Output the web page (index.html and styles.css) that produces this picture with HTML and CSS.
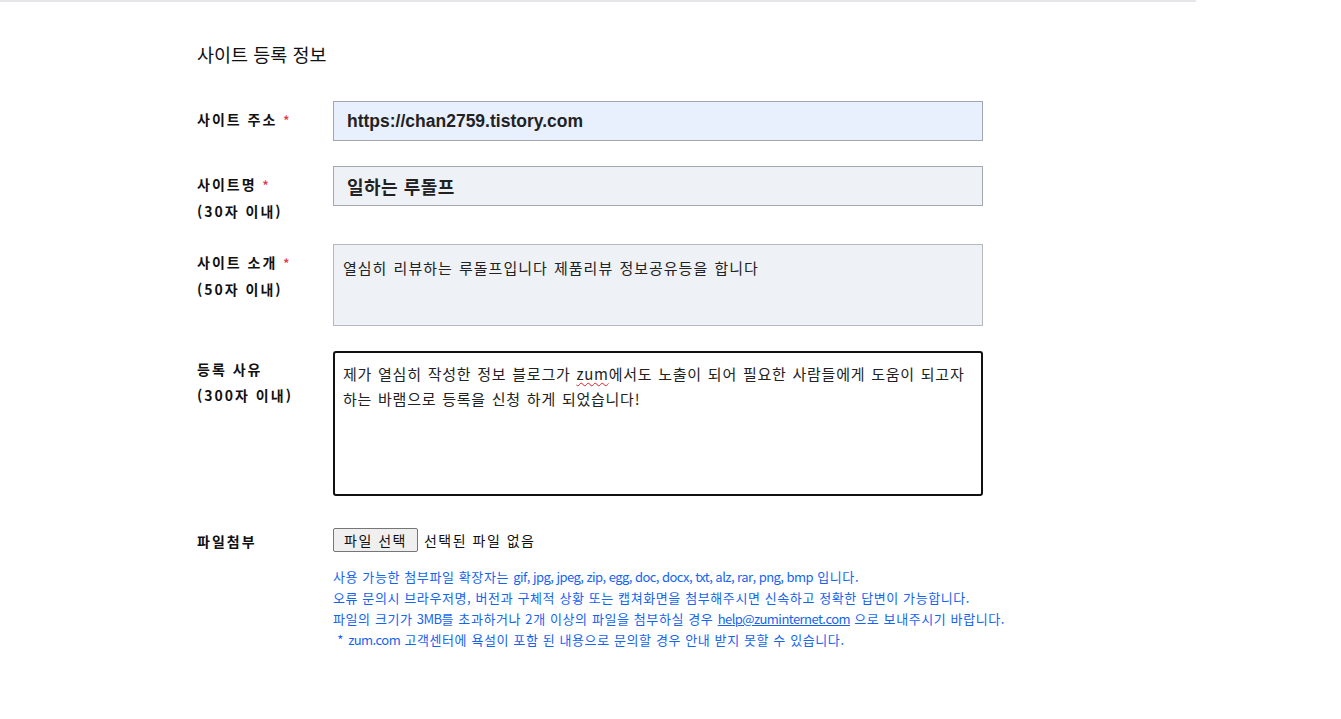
FILE: index.html
```html
<!DOCTYPE html>
<html lang="ko">
<head>
<meta charset="utf-8">
<title>사이트 등록 정보</title>
<link rel="stylesheet" href="styles.css">
</head>
<body>
<div class="page">
  <div class="content">
    <h2 class="title">사이트 등록 정보</h2>
    <div class="row row-1">
      <div class="label"><div>사이트 주소 <span class="req">*</span></div></div>
      <div class="field input input-url">https://chan2759.tistory.com</div>
    </div>
    <div class="row row-2">
      <div class="label"><div>사이트명 <span class="req">*</span></div><div>(30자 이내)</div></div>
      <div class="field input input-name">일하는 루돌프</div>
    </div>
    <div class="row row-3">
      <div class="label"><div>사이트 소개 <span class="req">*</span></div><div>(50자 이내)</div></div>
      <div class="field area area-intro">열심히 리뷰하는 루돌프입니다 제품리뷰 정보공유등을 합니다</div>
    </div>
    <div class="row row-4">
      <div class="label"><div>등록 사유</div><div>(300자 이내)</div></div>
      <div class="field area area-reason">제가 열심히 작성한 정보 블로그가 <span class="spell">zum</span>에서도 노출이 되어 필요한 사람들에게 도움이 되고자 하는 바램으로 등록을 신청 하게 되었습니다!</div>
    </div>
    <div class="row row-5">
      <div class="label"><div>파일첨부</div></div>
      <div class="file-col">
        <div class="file-line"><span class="file-btn">파일 선택</span><span class="file-none">선택된 파일 없음</span></div>
        <ul class="help">
          <li>사용 가능한 첨부파일 확장자는 <span class="latin">gif, jpg, jpeg, zip, egg, doc, docx, txt, alz, rar, png, bmp</span> 입니다.</li>
          <li>오류 문의시 브라우저명, 버전과 구체적 상황 또는 캡쳐화면을 첨부해주시면 신속하고 정확한 답변이 가능합니다.</li>
          <li>파일의 크기가 <span class="latin">3MB</span>를 초과하거나 2개 이상의 파일을 첨부하실 경우 <a class="mail latin">help@zuminternet.com</a> 으로 보내주시기 바랍니다.</li>
          <li>&nbsp;* <span class="latin">zum.com</span> 고객센터에 욕설이 포함 된 내용으로 문의할 경우 안내 받지 못할 수 있습니다.</li>
        </ul>
      </div>
    </div>
  </div>
</div>
</body>
</html>
```
FILE: styles.css
```css
html, body {
  margin: 0;
  padding: 0;
  background: #fff;
}
body {
  font-family: "Noto Sans CJK KR", "Noto Sans", sans-serif;
  color: #111;
}
.page {
  width: 1196px;
  border-top: 2px solid #e4e6ea;
}
.content {
  padding: 37px 0 0 197px;
}
.title {
  margin: 0 0 32px 0;
  font-size: 18.5px;
  font-weight: 400;
  line-height: 30px;
  color: #111;
}
.row {
  display: flex;
  align-items: flex-start;
}
.row-1 { margin-bottom: 25px; }
.row-2 { margin-bottom: 20px; }
.row-3 { margin-bottom: 25px; }
.row-4 { margin-bottom: 32px; }
.label {
  width: 136px;
  flex: none;
  padding-top: 5px;
  font-size: 14px;
  font-weight: 700;
  line-height: 26px;
  letter-spacing: 2px;
  color: #111;
}
.req {
  color: #e8384f;
  font-size: 12px;
  letter-spacing: 0;
}
.field {
  box-sizing: border-box;
  width: 650px;
}
.input {
  height: 40px;
  border: 1px solid #a3a8b0;
  padding: 0 13px;
  display: flex;
  align-items: center;
  font-weight: 700;
  color: #222;
}
.input-url {
  background: #e8f0fe;
  font-family: "Liberation Sans", Arial, sans-serif;
  font-size: 17.5px;
}
.input-name {
  background: #eef1f5;
  font-size: 18px;
  letter-spacing: 0.5px;
}
.area {
  font-size: 15px;
  line-height: 25px;
  letter-spacing: 1px;
  word-spacing: 1px;
  word-break: keep-all;
  color: #222;
}
.area-intro {
  height: 82px;
  background: #eef1f5;
  border: 1px solid #b5b9bf;
  padding: 10px 9px;
}
.area-reason {
  height: 145px;
  background: #fff;
  border: 2px solid #111;
  border-radius: 3px;
  padding: 8px 8px;
  letter-spacing: 0.75px;
}
.spell {
  text-decoration: underline wavy #e02020;
  text-decoration-thickness: 1px;
  text-underline-offset: 2px;
}
.row-5 .label {
  padding-top: 0;
}
.file-col {
  display: flex;
  flex-direction: column;
}
.file-line {
  display: flex;
  align-items: center;
  font-size: 14px;
  letter-spacing: 1.5px;
  color: #111;
}
.file-btn {
  box-sizing: border-box;
  height: 24px;
  padding: 0 10px;
  display: flex;
  align-items: center;
  background: #efefef;
  border: 1px solid #767676;
  border-radius: 2px;
}
.file-none {
  margin-left: 6px;
}
.help {
  list-style: none;
  margin: 14px 0 0 0;
  padding: 0;
  font-size: 13px;
  line-height: 21px;
  color: #1464f0;
  letter-spacing: 0.6px;
}
.latin {
  letter-spacing: -0.55px;
}
.mail {
  color: #1464f0;
  text-decoration: underline;
}
```
